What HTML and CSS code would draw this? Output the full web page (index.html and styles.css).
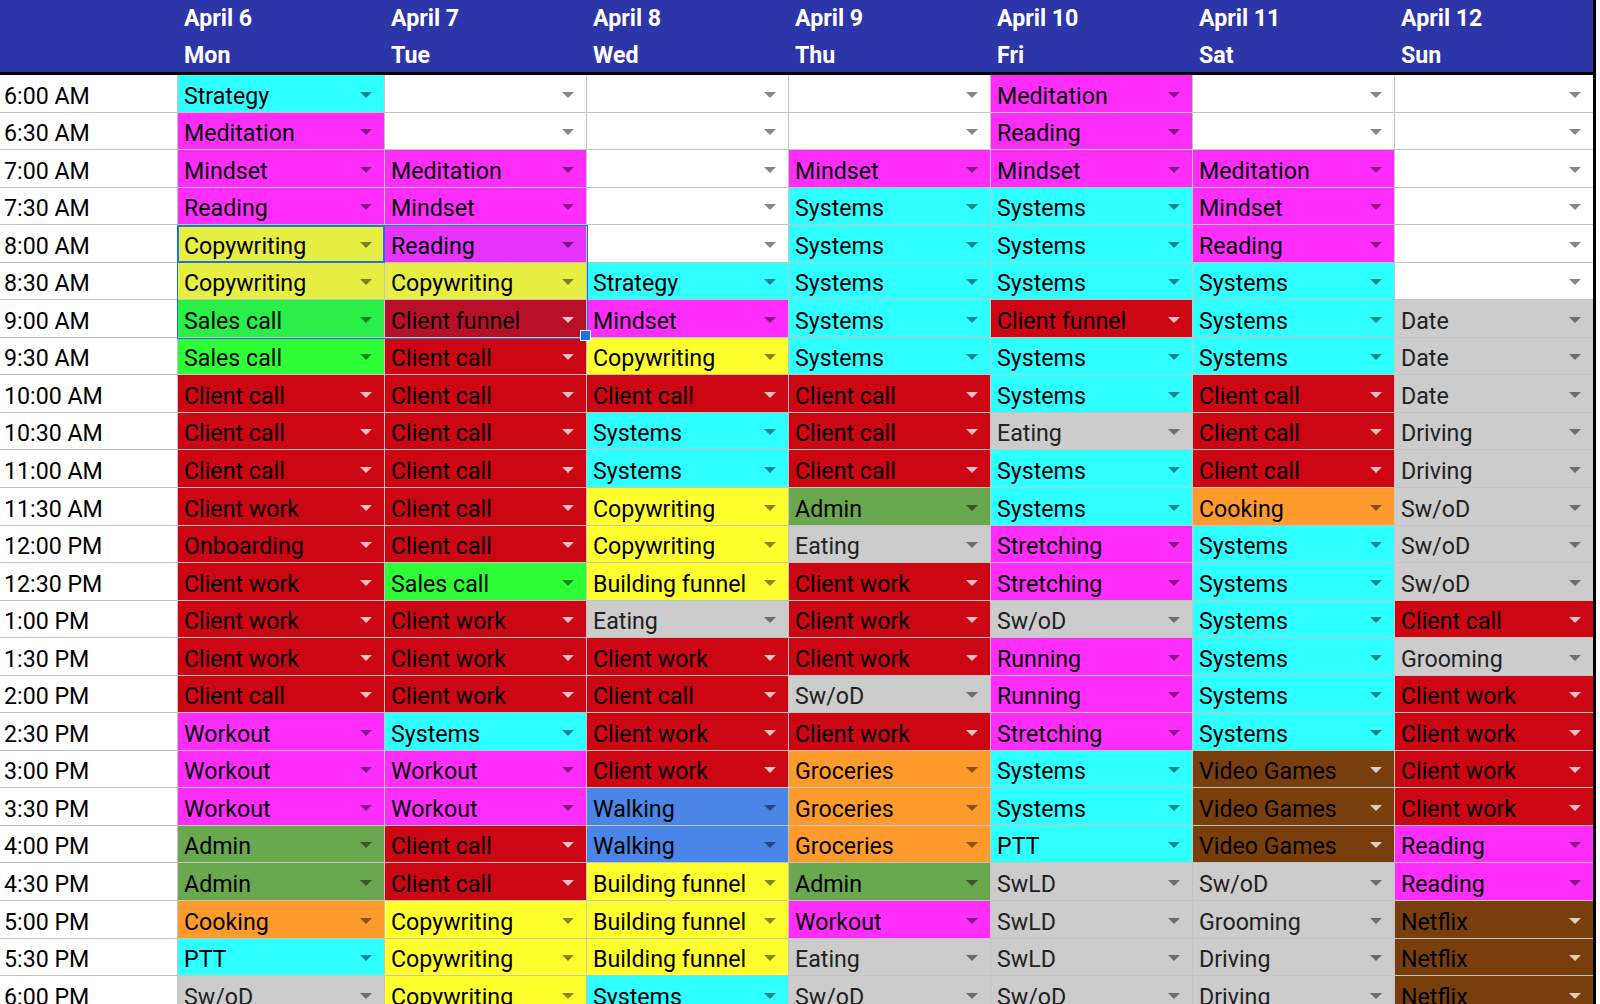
FILE: index.html
```html
<!DOCTYPE html>
<html>
<head>
<meta charset="utf-8">
<link rel="stylesheet" href="styles.css">
</head>
<body>
<div class="sheet">
  <div class="head">
    <div class="hc"></div>
    <div class="hc"><span>April 6</span><span>Mon</span></div>
    <div class="hc"><span>April 7</span><span>Tue</span></div>
    <div class="hc"><span>April 8</span><span>Wed</span></div>
    <div class="hc"><span>April 9</span><span>Thu</span></div>
    <div class="hc"><span>April 10</span><span>Fri</span></div>
    <div class="hc"><span>April 11</span><span>Sat</span></div>
    <div class="hc"><span>April 12</span><span>Sun</span></div>
  </div>
  <div class="grid" id="grid"></div>
  <div class="sel"></div>
  <div class="active"></div>
  <div class="handle"></div>
</div>
<script src="app.js"></script>
</body>
</html>
```

FILE: app.js
```js
const times = ["6:00 AM","6:30 AM","7:00 AM","7:30 AM","8:00 AM","8:30 AM","9:00 AM","9:30 AM","10:00 AM","10:30 AM","11:00 AM","11:30 AM","12:00 PM","12:30 PM","1:00 PM","1:30 PM","2:00 PM","2:30 PM","3:00 PM","3:30 PM","4:00 PM","4:30 PM","5:00 PM","5:30 PM","6:00 PM"];
const cls = {
  "Strategy":"cy","Systems":"cy","PTT":"cy",
  "Meditation":"mg","Mindset":"mg","Reading":"mg","Workout":"mg","Stretching":"mg","Running":"mg",
  "Copywriting":"ye","Building funnel":"ye",
  "Sales call":"gr",
  "Client call":"rd","Client work":"rd","Client funnel":"rd","Onboarding":"rd",
  "Admin":"dg","Cooking":"or","Groceries":"or","Walking":"bl",
  "Video Games":"br","Netflix":"br",
  "Eating":"gy","Sw/oD":"gy","SwLD":"gy","Date":"gy","Driving":"gy","Grooming":"gy",
  "":"em"
};
const cols = [
  ["Strategy","Meditation","Mindset","Reading","Copywriting","Copywriting","Sales call","Sales call","Client call","Client call","Client call","Client work","Onboarding","Client work","Client work","Client work","Client call","Workout","Workout","Workout","Admin","Admin","Cooking","PTT","Sw/oD"],
  ["","","Meditation","Mindset","Reading","Copywriting","Client funnel","Client call","Client call","Client call","Client call","Client call","Client call","Sales call","Client work","Client work","Client work","Systems","Workout","Workout","Client call","Client call","Copywriting","Copywriting","Copywriting"],
  ["","","","","","Strategy","Mindset","Copywriting","Client call","Systems","Systems","Copywriting","Copywriting","Building funnel","Eating","Client work","Client call","Client work","Client work","Walking","Walking","Building funnel","Building funnel","Building funnel","Systems"],
  ["","","Mindset","Systems","Systems","Systems","Systems","Systems","Client call","Client call","Client call","Admin","Eating","Client work","Client work","Client work","Sw/oD","Client work","Groceries","Groceries","Groceries","Admin","Workout","Eating","Sw/oD"],
  ["Meditation","Reading","Mindset","Systems","Systems","Systems","Client funnel","Systems","Systems","Eating","Systems","Systems","Stretching","Stretching","Sw/oD","Running","Running","Stretching","Systems","Systems","PTT","SwLD","SwLD","SwLD","Sw/oD"],
  ["","","Meditation","Mindset","Reading","Systems","Systems","Systems","Client call","Client call","Client call","Cooking","Systems","Systems","Systems","Systems","Systems","Systems","Video Games","Video Games","Video Games","Sw/oD","Grooming","Driving","Driving"],
  ["","","","","","","Date","Date","Date","Driving","Driving","Sw/oD","Sw/oD","Sw/oD","Client call","Grooming","Client work","Client work","Client work","Client work","Reading","Reading","Netflix","Netflix","Netflix"]
];
const grid = document.getElementById("grid");
let html = "";
times.forEach((t, r) => {
  html += '<div class="row"><div class="t">' + t + '</div>';
  cols.forEach((col, c) => {
    const v = col[r];
    const tint = (c < 2 && r >= 4 && r <= 6) ? " tint" : "";
    html += '<div class="c ' + cls[v] + tint + '"><span>' + v + '</span><i></i></div>';
  });
  html += '</div>';
});
grid.innerHTML = html;
```

FILE: styles.css
```css
html, body {
  margin: 0;
  padding: 0;
  height: 1004px;
  overflow: hidden;
  background: #fff;
}
body {
  font-family: Roboto, "Liberation Sans", Arial, sans-serif;
}
.sheet {
  position: relative;
  width: 1593px;
  border-right: 3px solid #000;
}
.head, .row {
  display: grid;
  grid-template-columns: 178px 207px 202px 202px 202px 202px 202px 198px;
}
.head {
  height: 72px;
  background: #2c36a8;
  border-bottom: 3px solid #000;
}
.hc {
  display: flex;
  flex-direction: column;
  padding-left: 6px;
  color: #fff;
  font-weight: 700;
  font-size: 23.2px;
  line-height: 37px;
  overflow: hidden;
}
.row {
  height: 37.56px;
}
.t, .c {
  box-sizing: border-box;
  border-right: 1px solid #c4c4c4;
  border-bottom: 1px solid #c4c4c4;
  font-size: 23.2px;
  line-height: 22px;
  color: #000;
  display: flex;
  align-items: flex-end;
  padding-bottom: 5px;
  white-space: nowrap;
  overflow: hidden;
}
.t {
  padding-left: 4px;
}
.c {
  padding-left: 6px;
  padding-right: 12px;
  justify-content: space-between;
}
.row .c:last-child {
  border-right: none;
}
.c i {
  align-self: flex-end;
  margin-bottom: 9px;
  width: 0;
  height: 0;
  border-left: 6.5px solid transparent;
  border-right: 6.5px solid transparent;
  border-top: 6px solid rgba(0,0,0,0.47);
}
.rd i, .br i {
  border-top-color: rgba(255,255,255,0.75);
}
.em { background: #fff; }
.cy { background: #2effff; }
.mg { background: #ff2dfc; }
.ye { background: #ffff2e; }
.gr { background: #2efe36; }
.rd { background: #cc0612; }
.dg { background: #6aa84f; }
.or { background: #ff9b2c; }
.bl { background: #4a86e8; }
.br { background: #783f0c; }
.gy { background: #cccccc; }
.gy span { color: #222; }
.tint { background-image: linear-gradient(rgba(14,101,235,0.1), rgba(14,101,235,0.1)); }
.sel {
  position: absolute;
  left: 177px;
  top: 224.5px;
  width: 409px;
  height: 112px;
  border: 1px solid #1a73e8;
  pointer-events: none;
}
.active {
  position: absolute;
  left: 177px;
  top: 224.5px;
  width: 204px;
  height: 34px;
  border: 2px solid #1a73e8;
}
.handle {
  position: absolute;
  left: 580px;
  top: 330px;
  width: 9px;
  height: 9px;
  background: #1a73e8;
  border: 1px solid #fff;
}
```
